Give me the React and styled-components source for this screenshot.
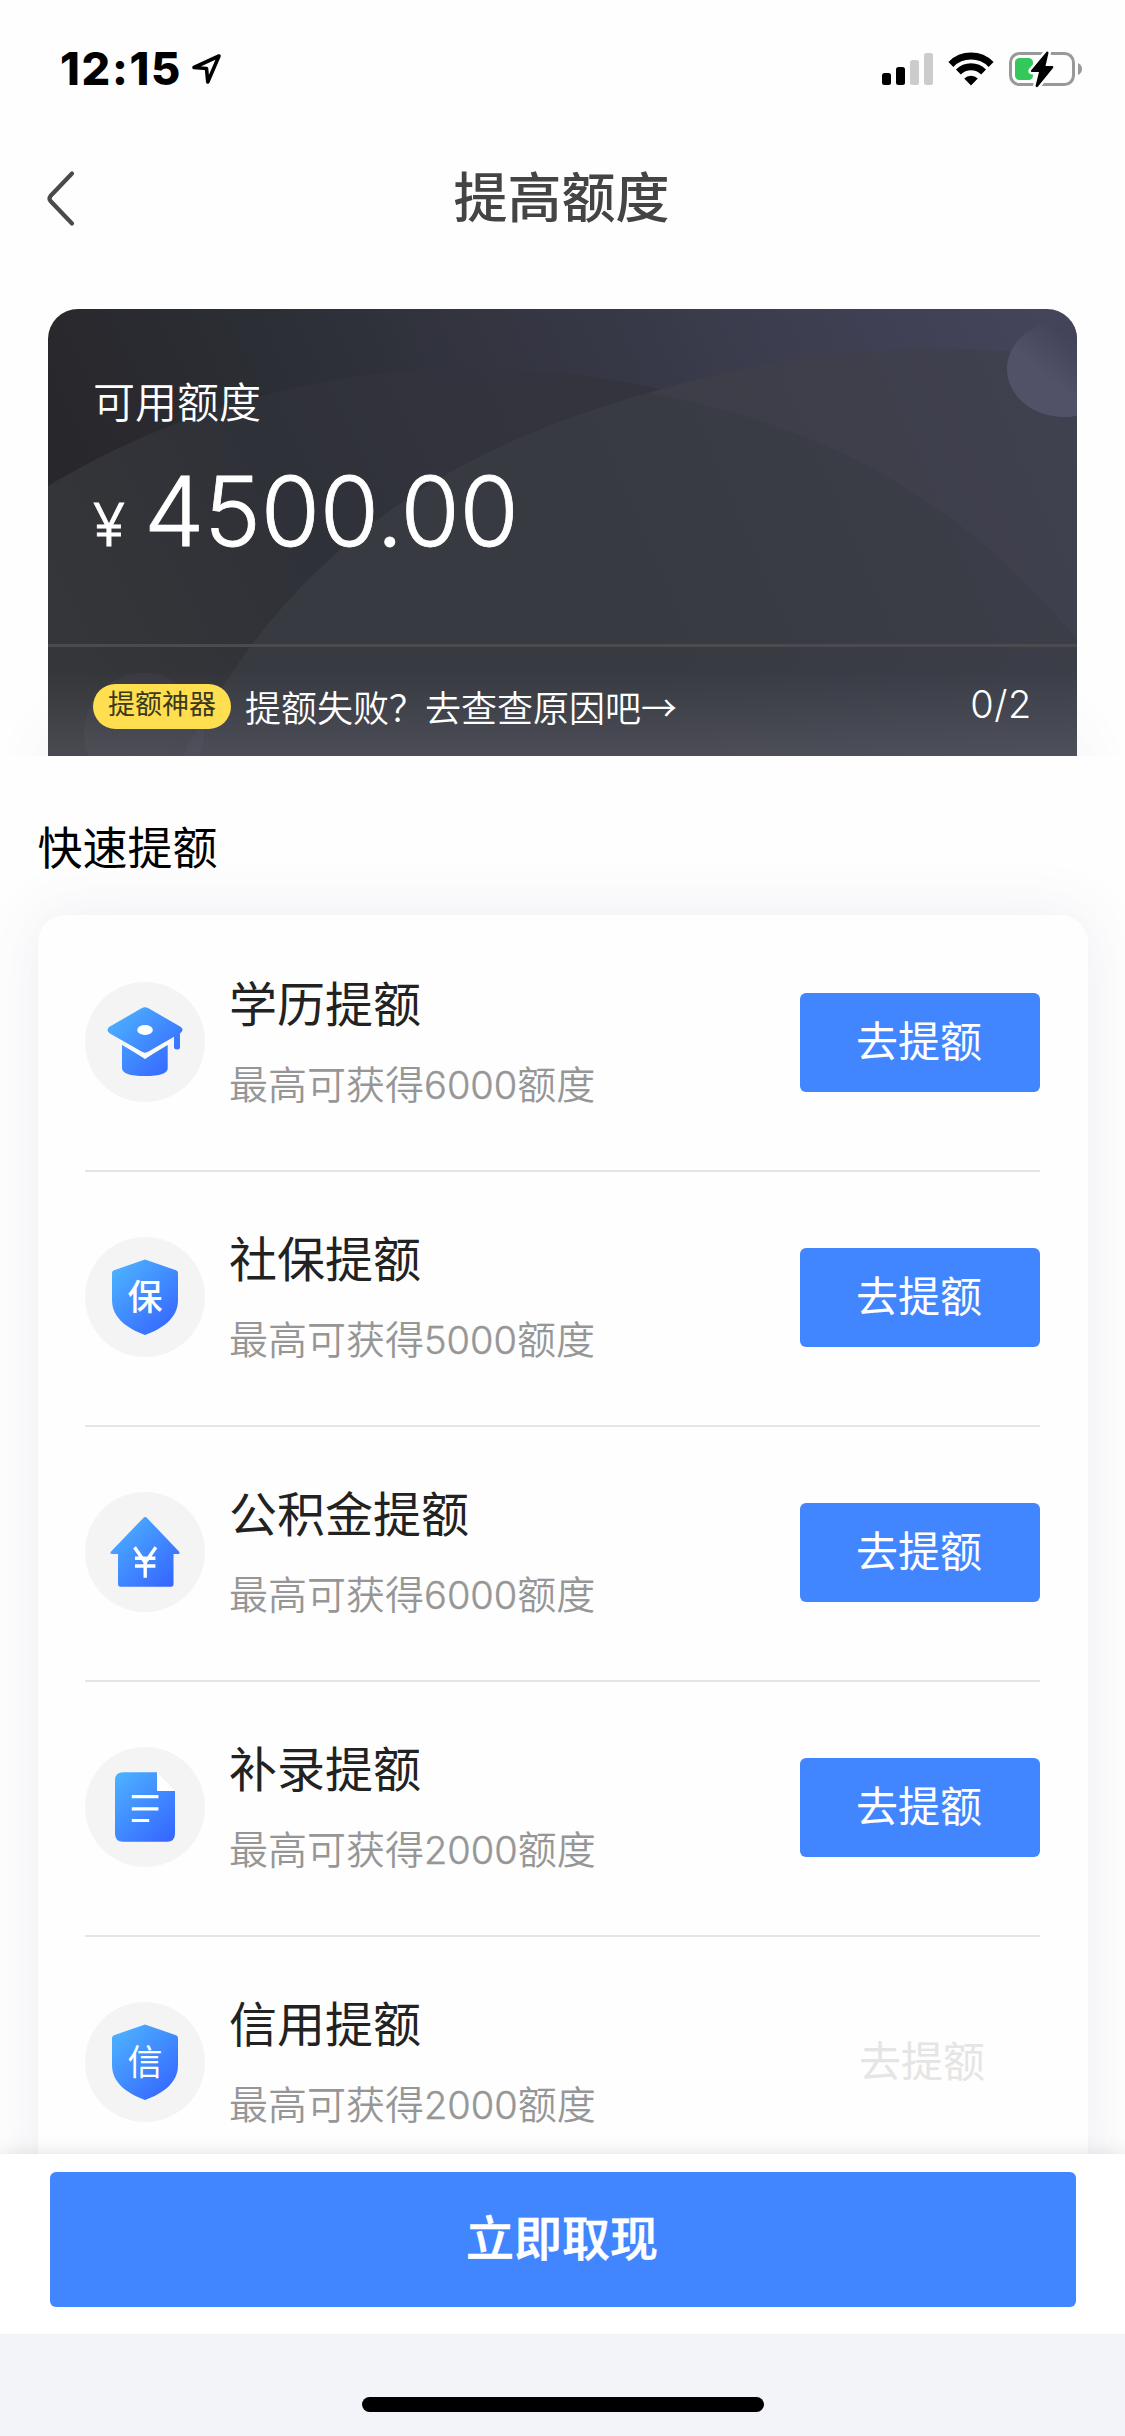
import React from "react";
import styled, {createGlobalStyle} from "styled-components";

const GlobalStyle = createGlobalStyle`
  * {
    box-sizing: border-box;
  }

  body {
    margin: 0;
    background: #ffffff;
    font-family: Inter, "Noto Sans CJK SC", sans-serif;
  }
`;

const Page = styled.div`
  width: 1125px;
  height: 2436px;
  display: flex;
  flex-direction: column;
  overflow: hidden;
  background: #fefefe;
`;

const StatusBar = styled.div`
  flex: none;
  height: 132px;
  display: flex;
  justify-content: space-between;
  padding: 46px 41px 0 60px;
`;

const StatusGroup = styled.div`
  height: 46px;
  display: flex;
  align-items: center;
  gap: ${props => props.gap}px;
`;

const Clock = styled.div`
  font-size: 45px;
  line-height: 46px;
  font-weight: 800;
  letter-spacing: 1.7px;
  color: #000000;
`;

const NavBar = styled.div`
  flex: none;
  height: 132px;
  display: grid;
  grid-template-columns: 120px 1fr 120px;
  align-items: center;
  padding-right: 2px;
`;

const BackButton = styled.button`
  height: 60px;
  padding: 0 0 0 45px;
  border: unset;
  background: unset;
  display: flex;
  align-items: center;
`;

const NavTitle = styled.h1`
  margin: 0;
  padding-top: 2px;
  font-size: 54px;
  line-height: 66px;
  font-weight: 500;
  text-align: center;
  color: #444444;
`;

const Hero = styled.div`
  flex: none;
  padding: 45px 48px 0;
  overflow: hidden;
`;

const QuotaCard = styled.div`
  position: relative;
  height: 447px;
  border-radius: 30px 30px 0 0;
  display: flex;
  flex-direction: column;
  color: #ffffff;
  box-shadow: 0 420px 60px rgba(80, 90, 150, 0.08);
`;

const QuotaArt = styled.svg`
  position: absolute;
  inset: 0;
  border-radius: 30px 30px 0 0;
`;

const QuotaBody = styled.div`
  position: relative;
  height: 338px;
  padding: 69px 45px 0;
  border-bottom: 3px solid #4b4b4f;
`;

const QuotaLabel = styled.div`
  font-size: 42px;
  line-height: 50px;
  font-weight: 350;
`;

const QuotaAmount = styled.div`
  display: flex;
  align-items: baseline;
  gap: 17px;
  margin-top: 27px;
  line-height: 112px;
  font-size: 96px;
  font-weight: 300;
  letter-spacing: -0.3px;
  -webkit-text-stroke: 0.8px #ffffff;
`;

const Currency = styled.span`
  font-size: 59px;
  letter-spacing: 2px;
`;

const TipRow = styled.div`
  position: relative;
  flex: 1;
  display: flex;
  align-items: center;
  padding: 9px 45px 0;
`;

const Badge = styled.span`
  width: 138px;
  height: 45px;
  border-radius: 23px;
  background: #ffdf4f;
  color: #3b381f;
  font-size: 27px;
  line-height: 42px;
  text-align: center;
`;

const Tip = styled.span`
  flex: 1;
  margin-left: 14px;
  font-family: "Noto Sans CJK SC", sans-serif;
  font-size: 36px;
  line-height: 44px;
  font-weight: 350;
`;

const TipCount = styled.span`
  padding-bottom: 4px;
  font-size: 38px;
  line-height: 44px;
  font-weight: 300;
  letter-spacing: 0.6px;
`;

const Section = styled.div`
  flex: 1;
  min-height: 0;
  padding: 65px 37.5px 0;
  overflow: hidden;
`;

const SectionTitle = styled.h2`
  margin: 0 0 39px;
  font-size: 45px;
  line-height: 55px;
  font-weight: 400;
  color: #000000;
`;

const List = styled.div`
  padding: 0 47.5px;
  border-radius: 28px;
  background: #fefefe;
  box-shadow: 0 0 60px rgba(80, 90, 140, 0.1);
`;

const Item = styled.div`
  height: 255px;
  display: flex;
  align-items: center;

  & + & {
    border-top: 2px solid #e5e5e5;
    padding-bottom: 2px;
  }
`;

const IconCircle = styled.div`
  width: 120px;
  height: 120px;
  margin-bottom: 2px;
  border-radius: 50%;
  background: #f4f4f4;
`;

const ItemText = styled.div`
  flex: 1;
  padding-top: 2px;
  margin-left: 24px;
`;

const ItemName = styled.div`
  font-size: 48px;
  line-height: 60px;
  color: #222222;
`;

const ItemDesc = styled.div`
  margin-top: 22px;
  font-size: 39px;
  line-height: 56px;
  font-weight: 350;
  color: #969696;
`;

const Digits = styled.span`
  font-size: 38px;
  font-weight: 300;
  -webkit-text-stroke: 0.4px #969696;
`;

const ItemButton = styled.button`
  width: 240px;
  height: 99px;
  border: unset;
  border-radius: 6px;
  padding: ${props => props.disabled ? '0 0 2px 4px' : '0 2px 2px 0'};
  background: ${props => props.disabled ? 'transparent' : '#4286ff'};
  color: ${props => props.disabled ? '#e5e5e5' : '#ffffff'};
  font-family: inherit;
  font-size: 42px;
  line-height: 50px;
`;

const ActionBar = styled.div`
  position: relative;
  flex: none;
  height: 180px;
  padding: 18px 49px 0 50px;
  background: #ffffff;
  box-shadow: 0 0 20px rgba(0, 0, 0, 0.12);
`;

const WithdrawButton = styled.button`
  width: 100%;
  height: 135px;
  padding: 0 2px 2px 0;
  border: unset;
  border-radius: 6px;
  background: #4286ff;
  color: #ffffff;
  font-family: inherit;
  font-size: 48px;
  line-height: 56px;
  font-weight: 500;
  -webkit-text-stroke: 0.6px #ffffff;
`;

const HomeArea = styled.div`
  position: relative;
  flex: none;
  height: 102px;
  display: flex;
  justify-content: center;
  align-items: flex-end;
  padding-bottom: 24px;
  background: #f3f4f9;
`;

const HomeIndicator = styled.div`
  width: 402px;
  height: 15px;
  border-radius: 8px;
  background: #000000;
`;

const Glyph = styled.text`
  font-family: Inter, "Noto Sans CJK SC", sans-serif;
  text-anchor: middle;
  fill: #ffffff;
`;

const LocationIcon = () => (
    <svg width="31" height="32" viewBox="0 0 31 32">
        <path d="M28 3 3 14.5 15.5 15.5 16.8 29Z" fill="none" stroke="#000" strokeWidth="3.6" strokeLinejoin="round"/>
    </svg>
);

const SignalIcon = () => (
    <svg width="51" height="34" viewBox="0 0 51 34">
        <rect x="0" y="21" width="9" height="12" rx="2.5"/>
        <rect x="14" y="15" width="9" height="18" rx="2.5"/>
        <rect x="28" y="8" width="9" height="25" rx="2.5" fill="#ccc"/>
        <rect x="42" y="1" width="9" height="32" rx="2.5" fill="#ccc"/>
    </svg>
);

const WifiIcon = () => (
    <svg width="46" height="34" viewBox="0 0 46 34">
        <path d="M2.9 12.4A28.5 28.5 0 0 1 43.1 12.4" fill="none" stroke="#000" strokeWidth="7"/>
        <path d="M10.4 20A17.8 17.8 0 0 1 35.6 20" fill="none" stroke="#000" strokeWidth="6.8"/>
        <path d="M23 33.4 16.2 26.6A9.6 9.6 0 0 1 29.8 26.6Z"/>
    </svg>
);

const BatteryIcon = () => (
    <svg width="75" height="38" viewBox="0 0 75 38">
        <rect x="1.5" y="3.5" width="63" height="31" rx="9" fill="none" stroke="#999" strokeWidth="3"/>
        <path d="M69 13Q73 15 73 19T69 25Z" fill="#999"/>
        <rect x="6" y="8" width="18" height="22" rx="4.5" fill="#34c759"/>
        <path
            d="M37.8 1.5 22 20.5Q21.5 22 23 22H30L26.5 36Q27.5 38 29 36.5L44 18Q45 16 43 16H36.5L39.5 3Q39.5 1 37.8 1.5Z"
            stroke="#fefefe" strokeWidth="5" paintOrder="stroke"
        />
    </svg>
);

const BackIcon = () => (
    <svg width="32" height="60" viewBox="0 0 32 60">
        <path d="M27 5.5 5.5 28Q3.5 30.5 5.5 33L27 55.5" fill="none" stroke="#4a4a4a" strokeWidth="4.2" strokeLinecap="round"/>
    </svg>
);

const HatIcon = () => (
    <>
        <path d="M37 63 60 76.5 82.7 63V86Q82.7 94 60 94T37 86Z"/>
        <path d="M89 48H95V65Q95 67.5 92 67.5T89 65Z"/>
        <path d="M35 57.5 60 74 84 58" fill="none" stroke="#fafafa" strokeWidth="5"/>
        <path d="M56.5 26.2Q60 24.3 63.5 26.2L95.5 44.8Q99.8 47.8 95.5 51L63.5 69.6Q60 71.8 56.5 69.6L24.5 51.2Q20.5 48 24.5 44.8Z"/>
        <ellipse cx="60" cy="48" rx="7.8" ry="5" fill="#fff"/>
    </>
);

const ShieldIcon = ({char, weight}) => (
    <>
        <path d="M60 22.5 91 33.2Q93 34 93 36V63C93 82 76 92 60 98 44 92 27 82 27 63V36Q27 34 29 33.2Z"/>
        <Glyph x="60" y="72.5" fontSize="35" fontWeight={weight}>{char}</Glyph>
    </>
);

const HouseIcon = () => (
    <>
        <path d="M58.3 26Q60 24.2 62 26L94 59.5Q95.5 62 93 62H88.5V92Q88.5 94.7 86 94.7H35.5Q33 94.7 33 92V62H27Q24.5 62 26 59.5Z"/>
        <path d="M49.5 55.3 60.2 70.5 70.9 55.3M60.2 70V85.7M50 66.3H70.4M50 74H70.4" fill="none" stroke="#fff" strokeWidth="3.4"/>
    </>
);

const DocIcon = () => (
    <>
        <path d="M38 25.3H72V44H90V86.5Q90 94.7 82 94.7H38Q30 94.7 30 86.5V33.5Q30 25.3 38 25.3Z"/>
        <path d="M72 25.3 90 44H72Z" fill="#fff"/>
        <path d="M46.8 49.7H73.4M46.8 61.8H73.4M46.8 73.5H64.2" stroke="#fff" strokeWidth="3.2"/>
    </>
);

const items = [
    {name: "学历提额", quota: 6000, icon: <HatIcon/>},
    {name: "社保提额", quota: 5000, icon: <ShieldIcon char="保" weight={500}/>},
    {name: "公积金提额", quota: 6000, icon: <HouseIcon/>},
    {name: "补录提额", quota: 2000, icon: <DocIcon/>},
    {name: "信用提额", quota: 2000, icon: <ShieldIcon char="信" weight={400}/>, disabled: true},
];

const QuotaBackground = () => (
    <QuotaArt width="1029" height="447" viewBox="0 0 1029 447">
        <defs>
            <linearGradient id="base" x1="0" y1="0.2" x2="1" y2="0">
                <stop offset="0" stopColor="#28272c"/>
                <stop offset="0.25" stopColor="#2c2f36"/>
                <stop offset="0.45" stopColor="#343541"/>
                <stop offset="1" stopColor="#45465d"/>
            </linearGradient>
            <linearGradient id="hillBack" gradientUnits="userSpaceOnUse" x1="0" y1="300" x2="480" y2="60">
                <stop offset="0" stopColor="#353639"/>
                <stop offset="0.5" stopColor="#2f3138"/>
                <stop offset="1" stopColor="#34343f"/>
            </linearGradient>
            <linearGradient id="hillFront" x1="0" y1="0.5" x2="1" y2="0.3">
                <stop offset="0" stopColor="#3c3c44"/>
                <stop offset="0.45" stopColor="#3b3c44"/>
                <stop offset="1" stopColor="#40414f"/>
            </linearGradient>
            <linearGradient id="moon" x1="0.2" y1="0.8" x2="0.8" y2="0.2">
                <stop offset="0.3" stopColor="#515268"/>
                <stop offset="0.8" stopColor="#434459"/>
            </linearGradient>
            <linearGradient id="glow" x1="0" y1="0" x2="0" y2="1">
                <stop offset="0" stopColor="#8a8a9c" stopOpacity="0"/>
                <stop offset="1" stopColor="#8a8a9c" stopOpacity="0.24"/>
            </linearGradient>
        </defs>
        <rect width="1029" height="447" fill="url(#base)"/>
        <path d="M0 177C120 105 260 63 400 60 500 58 560 68 614 81L700 447H0Z" fill="url(#hillBack)"/>
        <path d="M135 447C240 240 400 140 600 84 720 48 840 34 959 42L1029 50V447Z" fill="url(#hillFront)"/>
        <path d="M135 447C240 240 400 140 600 84 800 120 930 210 1029 331V447Z" fill="#33383c" fillOpacity="0.3"/>
        <ellipse cx="1016" cy="60" rx="57" ry="48" fill="url(#moon)"/>
        <circle cx="96" cy="424" r="60" fill="#5d5d72" fillOpacity="0.14"/>
        <rect y="360" width="1029" height="87" fill="url(#glow)"/>
    </QuotaArt>
);

const App = () => {
    return (
        <Page>
            <GlobalStyle/>
            <svg width="0" height="0" style={{position: 'absolute'}}>
                <defs>
                    <linearGradient id="blue" gradientUnits="userSpaceOnUse" x1="28" y1="30" x2="88" y2="92">
                        <stop offset="0" stopColor="#4db2ff"/>
                        <stop offset="1" stopColor="#3566ff"/>
                    </linearGradient>
                </defs>
            </svg>
            <StatusBar>
                <StatusGroup gap={9}>
                    <Clock>12:15</Clock>
                    <LocationIcon/>
                </StatusGroup>
                <StatusGroup gap={15}>
                    <SignalIcon/>
                    <WifiIcon/>
                    <BatteryIcon/>
                </StatusGroup>
            </StatusBar>
            <NavBar>
                <BackButton>
                    <BackIcon/>
                </BackButton>
                <NavTitle>提高额度</NavTitle>
            </NavBar>
            <Hero>
                <QuotaCard>
                    <QuotaBackground/>
                    <QuotaBody>
                        <QuotaLabel>可用额度</QuotaLabel>
                        <QuotaAmount>
                            <Currency>¥</Currency>
                            4500.00
                        </QuotaAmount>
                    </QuotaBody>
                    <TipRow>
                        <Badge>提额神器</Badge>
                        <Tip>提额失败？去查查原因吧→</Tip>
                        <TipCount>0/2</TipCount>
                    </TipRow>
                </QuotaCard>
            </Hero>
            <Section>
                <SectionTitle>快速提额</SectionTitle>
                <List>
                    {
                        items.map((item) => (
                            <Item key={item.name}>
                                <IconCircle>
                                    <svg width="120" height="120" viewBox="0 0 120 120" fill="url(#blue)">
                                        {item.icon}
                                    </svg>
                                </IconCircle>
                                <ItemText>
                                    <ItemName>{item.name}</ItemName>
                                    <ItemDesc>最高可获得<Digits>{item.quota}</Digits>额度</ItemDesc>
                                </ItemText>
                                <ItemButton disabled={item.disabled}>去提额</ItemButton>
                            </Item>
                        ))
                    }
                </List>
            </Section>
            <ActionBar>
                <WithdrawButton>立即取现</WithdrawButton>
            </ActionBar>
            <HomeArea>
                <HomeIndicator/>
            </HomeArea>
        </Page>
    );
};

export default App;
